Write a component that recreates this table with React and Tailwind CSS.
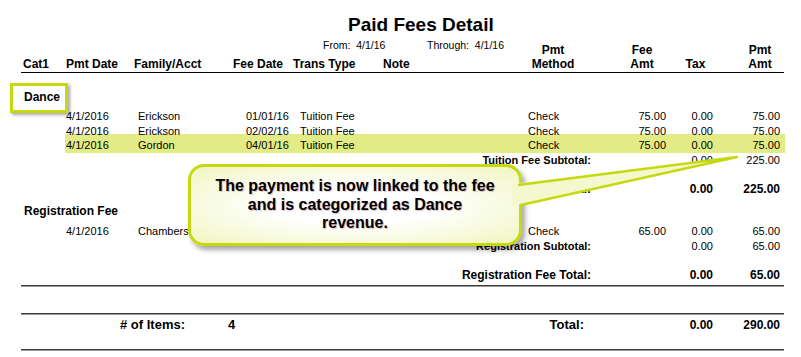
import React from "react";

const rows = [
  { pmt: "4/1/2016", fam: "Erickson", fee: "01/01/16", type: "Tuition Fee", amt: "75.00" },
  { pmt: "4/1/2016", fam: "Erickson", fee: "02/02/16", type: "Tuition Fee", amt: "75.00" },
  { pmt: "4/1/2016", fam: "Gordon", fee: "04/01/16", type: "Tuition Fee", amt: "75.00", hl: true },
];

function DataRow({ r }) {
  return (
    <div className="flex text-[11px] leading-[14.5px]">
      <span className="w-[72px] shrink-0">{r.pmt}</span>
      <span className="w-[108px] shrink-0">{r.fam}</span>
      <span className="w-[54px] shrink-0">{r.fee}</span>
      <span className="w-[228px] shrink-0">{r.type}</span>
      <span className="w-[90px] shrink-0">Check</span>
      <span className="w-[48px] shrink-0 text-right">{r.amt}</span>
      <span className="w-[47px] shrink-0 text-right">0.00</span>
      <span className="w-[67px] shrink-0 text-right">{r.amt}</span>
    </div>
  );
}

function TotalRow({ label, tax, amt, bold, className = "" }) {
  return (
    <div className={`flex ${bold ? "text-[12px] font-bold" : "text-[11px]"} leading-[14.5px] ${className}`}>
      <span className="w-[591px] shrink-0 text-right font-bold">{label}</span>
      <span className="w-[122px] shrink-0 text-right">{tax}</span>
      <span className="w-[67px] shrink-0 text-right">{amt}</span>
    </div>
  );
}

function Rule({ className = "" }) {
  return <div className={`ml-[21px] h-[2px] w-[763px] border-t border-b border-t-[#3c3c3c] border-b-[#9a9a9a] ${className}`} />;
}

export default function App() {
  return (
    <div className="relative h-[357px] w-[801px] overflow-hidden bg-white font-['Liberation_Sans',Arial,sans-serif] text-black">
      {/* title */}
      <div className="pl-[348px] pt-[15px] text-[19px] font-bold leading-[20px]">Paid Fees Detail</div>
      <div className="mt-[4px] flex pl-[323px] text-[10.5px] leading-[12px]">
        <span className="w-[104px] whitespace-pre">From:  4/1/16</span>
        <span className="whitespace-pre">Through:  4/1/16</span>
      </div>

      {/* header */}
      <div className="-mt-[6px] ml-[21px] flex h-[28px] w-[763px] items-end border-b border-black pb-[1px] pl-[2px] text-[12px] font-bold leading-[13.5px]">
        <span className="w-[43px] shrink-0">Cat1</span>
        <span className="w-[68px] shrink-0">Pmt Date</span>
        <span className="w-[99px] shrink-0">Family/Acct</span>
        <span className="w-[60px] shrink-0">Fee Date</span>
        <span className="w-[90px] shrink-0">Trans Type</span>
        <span className="w-[135px] shrink-0">Note</span>
        <span className="w-[70px] shrink-0 text-center">Pmt<br />Method</span>
        <span className="w-[30px] shrink-0" />
        <span className="w-[48px] shrink-0 text-center">Fee<br />Amt</span>
        <span className="w-[59px] shrink-0 text-center">Tax</span>
        <span className="w-[70px] shrink-0 text-center">Pmt<br />Amt</span>
      </div>

      {/* Dance group */}
      <div className="ml-[10px] mt-[10px] h-[30px] w-[58px] border-[3px] border-[#c6d910] pl-[11px] pt-[5px] text-[12px] font-bold leading-[13.5px] shadow-[2px_2px_3px_rgba(0,0,0,0.35)]">
        Dance
      </div>
      <div className="-mt-[4px] ml-[65px] w-[720px]">
        {rows.map((r, i) => (
          <div key={i} className={r.hl ? "-mb-[0.5px] -mt-[4px] bg-[#e3eb86] pb-[0.5px] pl-[1px] pt-[4px]" : "pl-[1px]"}>
            <DataRow r={r} />
          </div>
        ))}
      </div>
      <TotalRow label="Tuition Fee Subtotal:" tax="0.00" amt="225.00" />
      <TotalRow label="Tuition Fee Total:" tax="0.00" amt="225.00" bold className="mt-[15px]" />

      {/* Registration group */}
      <div className="mt-[7.5px] pl-[24px] text-[12px] font-bold leading-[14.5px]">Registration Fee</div>
      <div className="ml-[66px] mt-[5.5px]">
        <DataRow r={{ pmt: "4/1/2016", fam: "Chambers", fee: "", type: "", amt: "65.00" }} />
      </div>
      <TotalRow label="Registration Subtotal:" tax="0.00" amt="65.00" />
      <TotalRow label="Registration Fee Total:" tax="0.00" amt="65.00" bold className="mt-[15px]" />

      <Rule className="mt-[2px]" />
      <Rule className="mt-[26px]" />
      <div className="mt-[2px] flex text-[13px] font-bold leading-[16px]">
        <span className="w-[228px] shrink-0 pl-[120px]"># of Items:</span>
        <span className="flex w-[356px] shrink-0 justify-between">
          <span>4</span>
          <span>Total:</span>
        </span>
        <span className="w-[129px] shrink-0 text-right text-[12px]">0.00</span>
        <span className="w-[67px] shrink-0 text-right text-[12px]">290.00</span>
      </div>
      <Rule className="mt-[16px]" />

      {/* callout */}
      <div className="absolute left-[188px] top-[164px] flex h-[82px] w-[334px] justify-center rounded-[16px] border-[3px] border-[#c6d910] bg-[radial-gradient(ellipse_at_center,#ffffff_35%,#f0f6bf_100%)] pt-[10px] text-center text-[16px] font-bold leading-[18.5px] shadow-[3px_4px_5px_rgba(0,0,0,0.35)] [text-shadow:1px_1px_1px_rgba(120,0,40,0.25)]">
        <p>
          The payment is now linked to the fee
          <br />
          and is categorized as Dance
          <br />
          revenue.
        </p>
      </div>
      <svg className="pointer-events-none absolute left-0 top-0" width="801" height="357" viewBox="0 0 801 357">
        <polygon points="512,184 737,157 512,206" fill="#f3f8cf" />
        <polyline points="518,185 737,157 521,205" fill="none" stroke="#c6d910" strokeWidth="2.5" strokeLinejoin="round" />
      </svg>
    </div>
  );
}
